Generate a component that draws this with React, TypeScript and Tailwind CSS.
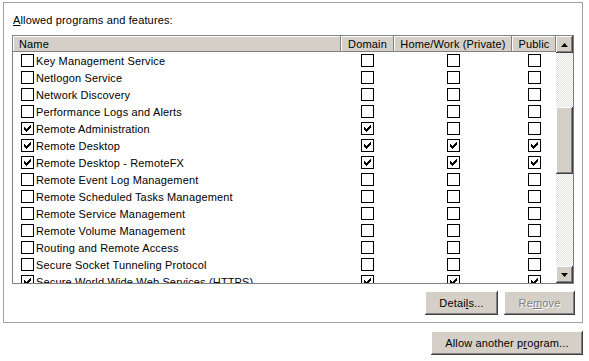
import React from 'react';

type Row = { name: string; on: boolean; d: boolean; h: boolean; p: boolean };

const rows: Row[] = [
  { name: 'Key Management Service', on: false, d: false, h: false, p: false },
  { name: 'Netlogon Service', on: false, d: false, h: false, p: false },
  { name: 'Network Discovery', on: false, d: false, h: false, p: false },
  { name: 'Performance Logs and Alerts', on: false, d: false, h: false, p: false },
  { name: 'Remote Administration', on: true, d: true, h: false, p: false },
  { name: 'Remote Desktop', on: true, d: true, h: true, p: true },
  { name: 'Remote Desktop - RemoteFX', on: true, d: true, h: true, p: true },
  { name: 'Remote Event Log Management', on: false, d: false, h: false, p: false },
  { name: 'Remote Scheduled Tasks Management', on: false, d: false, h: false, p: false },
  { name: 'Remote Service Management', on: false, d: false, h: false, p: false },
  { name: 'Remote Volume Management', on: false, d: false, h: false, p: false },
  { name: 'Routing and Remote Access', on: false, d: false, h: false, p: false },
  { name: 'Secure Socket Tunneling Protocol', on: false, d: false, h: false, p: false },
  { name: 'Secure World Wide Web Services (HTTPS)', on: true, d: true, h: true, p: true },
];

const Check = ({ on }: { on: boolean }) => (
  <span className="w-[13px] h-[13px] border border-black bg-white flex items-center justify-center shrink-0">
    {on && (
      <svg width="11" height="11" viewBox="0 0 11 11">
        <path d="M2 4h1v1h1v1h1V5h1V4h1V3h1V2h1v3H8v1H7v1H6v1H5v1H4V8H3V7H2z" fill="#000" />
      </svg>
    )}
  </span>
);

const bevel =
  'bg-[#d4d0c8] shadow-[inset_-1px_-1px_#404040,inset_1px_1px_#ffffff,inset_-2px_-2px_#808080,inset_2px_2px_#d4d0c8]';

const headCell = 'h-[16px] bg-[#d4d0c8] shadow-[inset_-1px_-1px_#808080,inset_1px_1px_#ffffff] flex items-center';

const Arrow = ({ up }: { up: boolean }) => (
  <div className={`w-[17px] h-[17px] flex items-center justify-center shrink-0 ${bevel}`}>
    <svg width="7" height="4" viewBox="0 0 7 4">
      <path d={up ? 'M3.5 0L7 4H0z' : 'M0 0h7L3.5 4z'} fill="#000" />
    </svg>
  </div>
);

const App = () => {
  return (
    <div className="w-[589px] h-[361px] bg-white text-black text-[11px] leading-[14px] tracking-[0.15px] font-['Liberation_Sans',Arial,sans-serif] pt-[2px]">
      <div className="ml-[3px] w-[580px] h-[321px] border border-[#a0a0a0] pt-[10px] flex flex-col">
        <div className="pl-[9px]">
          <span className="underline">A</span>llowed programs and features:
        </div>
        <div className="ml-[8px] mt-[8px] w-[562px] h-[249px] border border-[#808080] flex">
          <div className="w-[543px] flex flex-col overflow-hidden">
            <div className="flex shrink-0">
              <div className={`${headCell} w-[328px] pl-[6px]`}>Name</div>
              <div className={`${headCell} w-[53px] justify-center`}>Domain</div>
              <div className={`${headCell} w-[118px] justify-center`}>Home/Work (Private)</div>
              <div className={`${headCell} w-[44px] justify-center`}>Public</div>
            </div>
            {rows.map((r) => (
              <div key={r.name} className="flex h-[17px] shrink-0 items-center">
                <div className="w-[328px] pl-[8px] flex items-center gap-[2px] whitespace-nowrap">
                  <Check on={r.on} />
                  <span>{r.name}</span>
                </div>
                <div className="w-[53px] flex justify-center">
                  <Check on={r.d} />
                </div>
                <div className="w-[118px] flex justify-center">
                  <Check on={r.h} />
                </div>
                <div className="w-[44px] flex justify-center">
                  <Check on={r.p} />
                </div>
              </div>
            ))}
          </div>
          <div className="w-[17px] flex flex-col">
            <Arrow up />
            <div className="flex-1 flex flex-col bg-[repeating-conic-gradient(#ffffff_0_25%,#e4e2dc_0_50%)] bg-[length:2px_2px]">
              <div className="h-[54px]" />
              <div className={`h-[67px] ${bevel}`} />
            </div>
            <Arrow up={false} />
          </div>
        </div>
        <div className="flex justify-end gap-[6px] mt-[7px] pr-[7px]">
          <button className={`w-[73px] h-[24px] ${bevel}`}>
            Detai<span className="underline">l</span>s...
          </button>
          <button className={`w-[71px] h-[24px] text-[#808080] [text-shadow:1px_1px_#ffffff] ${bevel}`}>
            Re<span className="underline">m</span>ove
          </button>
        </div>
      </div>
      <div className="flex justify-end pr-[6px] mt-[8px]">
        <button className={`w-[152px] h-[24px] ${bevel}`}>
          Allow another p<span className="underline">r</span>ogram...
        </button>
      </div>
    </div>
  );
};

export default App;
